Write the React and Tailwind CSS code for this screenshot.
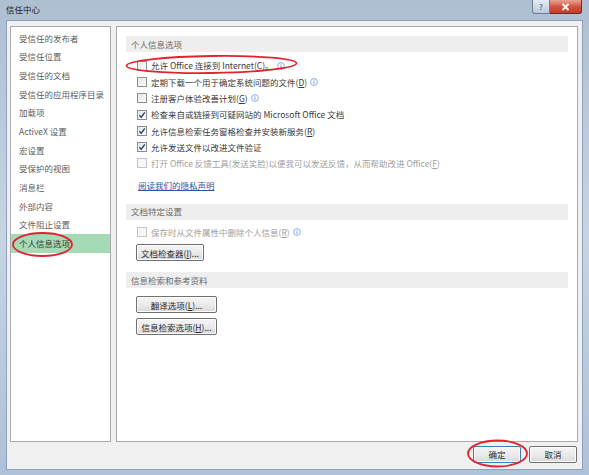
import { Fragment } from 'react';

const font = { fontFamily: '"Noto Sans CJK SC", "Liberation Sans", sans-serif' };

const navItems = [
    '受信任的发布者',
    '受信任位置',
    '受信任的文档',
    '受信任的应用程序目录',
    '加载项',
    'ActiveX 设置',
    '宏设置',
    '受保护的视图',
    '消息栏',
    '外部内容',
    '文件阻止设置',
    '个人信息选项',
];

function InfoIcon() {
    return (
        <svg width="8" height="8" viewBox="0 0 8 8" className="ml-[3px] shrink-0">
            <circle cx="4" cy="4" r="3.4" fill="none" stroke="#6f9be0" strokeWidth="0.8" />
            <rect x="3.6" y="3.3" width="0.8" height="2.6" fill="#4a7fd6" />
            <rect x="3.6" y="1.8" width="0.8" height="0.8" fill="#4a7fd6" />
        </svg>
    );
}

function CheckBox({ checked, disabled }) {
    return (
        <span
            className={`w-[10px] h-[10px] shrink-0 border flex items-center justify-center ${
                disabled ? 'border-[#c5c5c5] bg-[#f7f7f7]' : 'border-[#8e8f8f] bg-gradient-to-br from-[#e6e6e6] to-[#fbfbfb]'
            }`}
        >
            {checked && (
                <svg width="8" height="8" viewBox="0 0 8 8">
                    <path d="M1.3 4.2 L3.2 6.2 L6.8 1.3" fill="none" stroke="#2b3a55" strokeWidth="1.3" />
                </svg>
            )}
        </span>
    );
}

function CheckRow({ checked, disabled, info, children }) {
    return (
        <div className="h-[16.3px] flex items-center pl-[20px]">
            <CheckBox checked={checked} disabled={disabled} />
            <span className={`ml-[4px] whitespace-nowrap ${disabled ? 'text-[#a0a0a0]' : 'text-[#3a3a3a]'}`}>{children}</span>
            {info && <InfoIcon />}
        </div>
    );
}

function SectionHeader({ children }) {
    return (
        <div className="h-[16px] mx-[9px] bg-[#eeeeee] flex items-center pl-[5px] text-[#6a6a6a]">{children}</div>
    );
}

function Button({ w, children, primary }) {
    return (
        <div
            className={`${w} h-[17px] rounded-[2px] border flex items-center justify-center text-[#2a2a2a] bg-gradient-to-b from-[#f4f4f4] via-[#ebebeb] to-[#d9d9d9] shadow-[inset_0_0_0_1px_#fcfcfc] ${
                primary ? 'border-[#3c7fb1]' : 'border-[#707070]'
            }`}
        >
            {children}
        </div>
    );
}

export default function App() {
    return (
        <div className="relative w-[589px] h-[475px] flex flex-col bg-gradient-to-b from-[#aebfd2] via-[#c6d4e4] to-[#aec1d8] text-[8.5px] leading-none overflow-hidden" style={font}>
            {/* Title bar */}
            <div className="h-[20px] flex items-start shrink-0">
                <span className="ml-[6px] mt-[5px] text-[#1a1a1a]">信任中心</span>
                <div className="ml-auto mr-[7px] flex">
                    <div className="w-[18px] h-[14px] rounded-bl-[3px] border border-t-0 border-[#6d7d92] bg-gradient-to-b from-[#e5ecf4] to-[#b9c9dc] flex items-center justify-center text-[#3e4d60] text-[8px]">?</div>
                    <div className="w-[32px] h-[14px] rounded-br-[3px] border border-t-0 border-l-0 border-[#6b2b2b] bg-gradient-to-b from-[#e8a393] via-[#d2553f] to-[#c43a26] flex items-center justify-center">
                        <svg width="9" height="8" viewBox="0 0 9 8">
                            <path d="M1.5 1 L7.5 7 M7.5 1 L1.5 7" stroke="#fff" strokeWidth="1.8" />
                        </svg>
                    </div>
                </div>
            </div>

            {/* Dialog body */}
            <div className="flex-1 ml-[6px] mr-[6px] border border-[#8da2bd] bg-[#f0f0f0] flex flex-col">
                <div className="flex gap-[5px] pt-[5px] pl-[3px] pr-[4px] h-[421px]">
                    {/* Left nav */}
                    <div className="w-[101px] border border-[#aaaaaa] bg-white pt-[1.5px]">
                        {navItems.map((item, i) => (
                            <div
                                key={item}
                                className={`h-[18.7px] flex items-center pl-[8px] ${i === navItems.length - 1 ? 'bg-[#a4dab6] text-[#3a3a3a]' : 'text-[#5e5e5e]'}`}
                            >
                                {item}
                            </div>
                        ))}
                    </div>

                    {/* Right panel */}
                    <div className="flex-1 border border-[#aaaaaa] bg-white pt-[9px]">
                        <SectionHeader>个人信息选项</SectionHeader>
                        <div className="pt-[5.5px]">
                            <CheckRow info>
                                允许 Office 连接到 Internet(<u>C</u>)。
                            </CheckRow>
                            <CheckRow info>
                                定期下载一个用于确定系统问题的文件(<u>D</u>)
                            </CheckRow>
                            <CheckRow info>
                                注册客户体验改善计划(<u>G</u>)
                            </CheckRow>
                            <CheckRow checked>检查来自或链接到可疑网站的 Microsoft Office 文档</CheckRow>
                            <CheckRow checked>
                                允许信息检索任务窗格检查并安装新服务(<u>R</u>)
                            </CheckRow>
                            <CheckRow checked>允许发送文件以改进文件验证</CheckRow>
                            <CheckRow disabled>
                                打开 Office 反馈工具(发送笑脸)以便我可以发送反馈，从而帮助改进 Office(<u>F</u>)
                            </CheckRow>
                        </div>
                        <div className="h-[16px] mt-[5.5px] flex items-center pl-[21px]">
                            <span className="text-[#2b56a8] underline">阅读我们的隐私声明</span>
                        </div>

                        <div className="mt-[10.5px]">
                            <SectionHeader>文档特定设置</SectionHeader>
                        </div>
                        <div className="pt-[4.5px]">
                            <CheckRow disabled info>
                                保存时从文件属性中删除个人信息(<u>R</u>)
                            </CheckRow>
                        </div>
                        <div className="pl-[19px] mt-[4px]">
                            <Button w="w-[68px]">
                                文档检查器(<u>I</u>)...
                            </Button>
                        </div>

                        <div className="mt-[10.5px]">
                            <SectionHeader>信息检索和参考资料</SectionHeader>
                        </div>
                        <div className="pl-[19px] pt-[8.5px] flex flex-col gap-[5px]">
                            <Button w="w-[81px]">
                                翻译选项(<u>L</u>)...
                            </Button>
                            <Button w="w-[81px]">
                                信息检索选项(<u>H</u>)...
                            </Button>
                        </div>
                    </div>
                </div>

                {/* Footer */}
                <div className="flex justify-end gap-[8px] pr-[5px] pt-[4px]">
                    <Button w="w-[48px]" primary>确定</Button>
                    <Button w="w-[48px]">取消</Button>
                </div>
            </div>
            <div className="h-[5px] shrink-0" />

            {/* Red annotation marks */}
            <svg className="absolute inset-0 pointer-events-none" width="589" height="475">
                <ellipse cx="211.5" cy="64.5" rx="85" ry="8.5" transform="rotate(-0.8 211.5 64.5)" fill="none" stroke="#e2232f" strokeWidth="1.8" />
                <ellipse cx="42.5" cy="244.5" rx="29.5" ry="11.5" fill="none" stroke="#e2232f" strokeWidth="1.8" />
                <ellipse cx="497.5" cy="453.5" rx="29.5" ry="13" fill="none" stroke="#e2232f" strokeWidth="1.8" />
            </svg>
        </div>
    );
}
